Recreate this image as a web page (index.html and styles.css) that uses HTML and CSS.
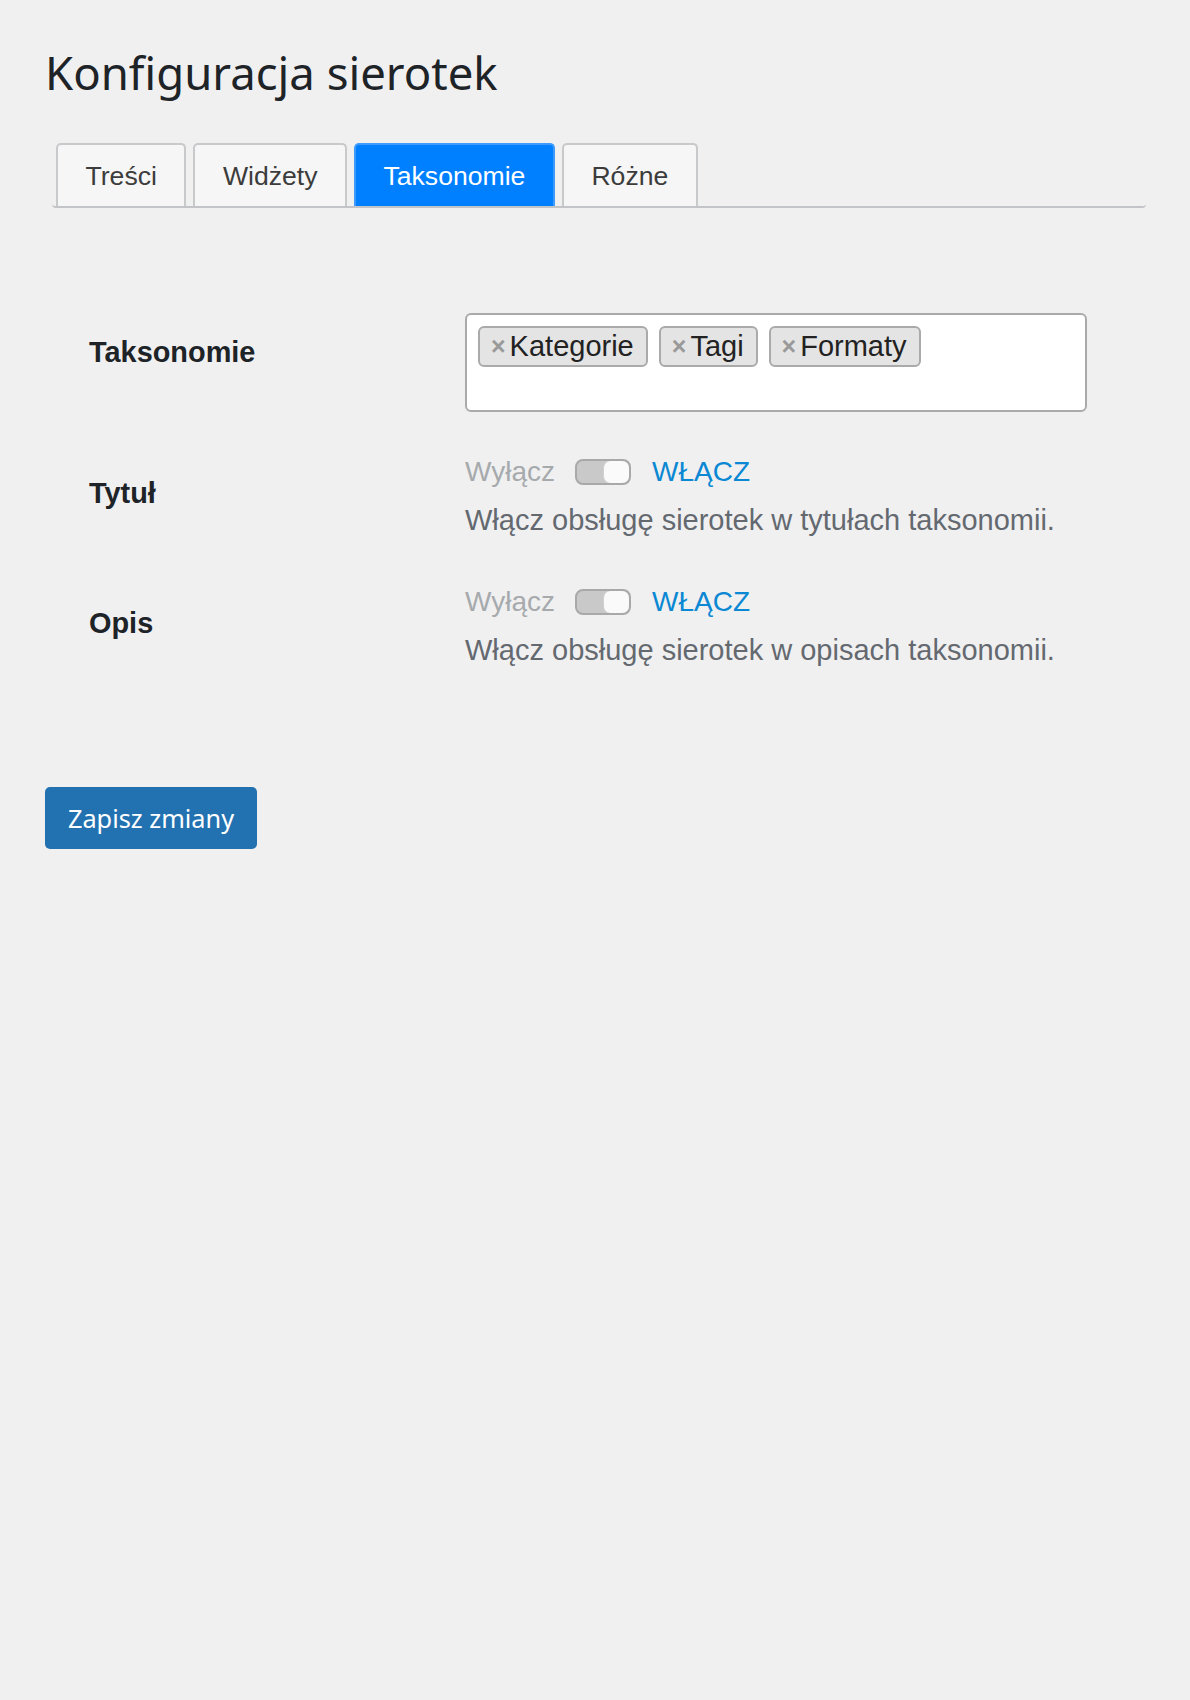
FILE: index.html
```html
<!DOCTYPE html>
<html lang="pl">
<head>
<meta charset="utf-8">
<title>Konfiguracja sierotek</title>
<link rel="stylesheet" href="styles.css">
</head>
<body>
<div class="wrap">
  <h1 class="title">Konfiguracja sierotek</h1>
  <nav class="tabs">
    <a class="tab">Treści</a>
    <a class="tab">Widżety</a>
    <a class="tab tab-active">Taksonomie</a>
    <a class="tab">Różne</a>
  </nav>
  <div class="form">
    <div class="row">
      <div class="label">Taksonomie</div>
      <div class="field">
        <div class="select">
          <span class="tag"><span class="tag-x">×</span>Kategorie</span>
          <span class="tag"><span class="tag-x">×</span>Tagi</span>
          <span class="tag"><span class="tag-x">×</span>Formaty</span>
        </div>
      </div>
    </div>
    <div class="row">
      <div class="label label-switch">Tytuł</div>
      <div class="field">
        <div class="switch-row">
          <span class="off">Wyłącz</span>
          <span class="toggle"><span class="knob"></span></span>
          <span class="on">WŁĄCZ</span>
        </div>
        <p class="desc">Włącz obsługę sierotek w tytułach taksonomii.</p>
      </div>
    </div>
    <div class="row">
      <div class="label label-switch">Opis</div>
      <div class="field">
        <div class="switch-row">
          <span class="off">Wyłącz</span>
          <span class="toggle"><span class="knob"></span></span>
          <span class="on">WŁĄCZ</span>
        </div>
        <p class="desc">Włącz obsługę sierotek w opisach taksonomii.</p>
      </div>
    </div>
  </div>
  <button class="save">Zapisz zmiany</button>
</div>
</body>
</html>
```
FILE: styles.css
```css
html, body {
  margin: 0;
  padding: 0;
  background: #f0f0f1;
}
body {
  min-height: 1700px;
  font-family: "Liberation Sans", Arial, sans-serif;
  color: #1d2327;
}
.wrap {
  padding: 42px 44px 0 45px;
}
.title {
  margin: 0;
  font-family: "Noto Sans", "Open Sans", sans-serif;
  font-weight: 400;
  font-size: 45.5px;
  line-height: 60px;
  color: #1d2327;
}
.tabs {
  display: flex;
  gap: 7px;
  margin: 41px 0 0 7px;
  padding-left: 4px;
  border-bottom: 2px solid #c3c4c7;
  border-radius: 0 0 4px 4px;
}
.tab {
  display: block;
  height: 61px;
  line-height: 62px;
  padding: 0 27.5px;
  border: 2px solid #c8c9cb;
  border-bottom: none;
  border-radius: 5px 5px 0 0;
  background: #f6f6f6;
  font-size: 26.6px;
  color: #3c3c3c;
}
.tab-active {
  background: #0080ff;
  border-color: #3d9bff;
  color: #ffffff;
}
.form {
  margin-top: 85px;
  padding-left: 44px;
}
.row {
  display: grid;
  grid-template-columns: 376px 1fr;
  padding: 20px 0 21px;
}
.label {
  padding-top: 21px;
  font-weight: 700;
  font-size: 28.9px;
  line-height: 36px;
  color: #1d2327;
}
.label-switch {
  padding-top: 22px;
}
.field {
  font-size: 28px;
}
.select {
  box-sizing: border-box;
  width: 622px;
  height: 99px;
  padding: 11px 11px;
  display: flex;
  align-items: flex-start;
  gap: 11px;
  background: #fff;
  border: 2px solid #aaaaaa;
  border-radius: 6px;
}
.tag {
  display: flex;
  align-items: center;
  height: 41px;
  box-sizing: border-box;
  padding: 0 12px 0 11px;
  background: #e4e4e4;
  border: 2px solid #aaaaaa;
  border-radius: 6px;
  font-size: 29px;
  color: #222;
  line-height: 1;
}
.tag-x {
  font-weight: 700;
  font-size: 25px;
  color: #999;
  margin-right: 4px;
}
.switch-row {
  display: flex;
  align-items: center;
  height: 36px;
  margin-top: 1px;
  line-height: 36px;
  font-size: 28px;
}
.off {
  color: #a7aaad;
}
.toggle {
  display: flex;
  justify-content: flex-end;
  box-sizing: border-box;
  width: 56px;
  height: 26px;
  margin: 0 21px 0 20px;
  background: #c9c9c9;
  border: 2px solid #a9a9a9;
  border-radius: 8px;
}
.knob {
  box-sizing: border-box;
  width: 26px;
  height: 22px;
  background: #fafafa;
  border-left: 1px solid #d0d0d0;
  border-radius: 7px;
}
.on {
  color: #0a88d3;
}
.desc {
  margin: 8px 0 0;
  font-size: 29px;
  line-height: 44px;
  color: #646970;
}
.save {
  margin-top: 94px;
  width: 212px;
  height: 62px;
  padding: 0;
  border: none;
  border-radius: 5px;
  background: #2271b1;
  color: #fff;
  font-family: "Noto Sans", "Open Sans", sans-serif;
  font-size: 25.3px;
}
```
